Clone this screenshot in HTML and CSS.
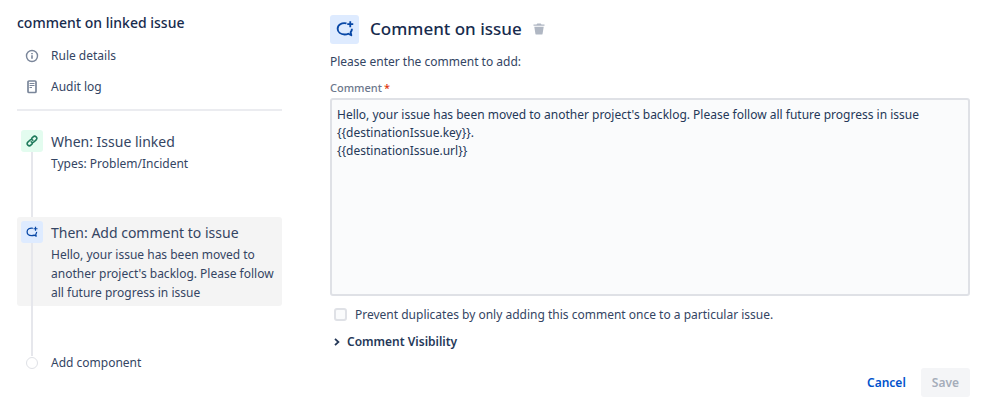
FILE: index.html
```html
<!DOCTYPE html>
<html lang="en">
<head>
<meta charset="utf-8">
<meta name="viewport" content="width=device-width, initial-scale=1">
<title>Automation rule</title>
<link rel="stylesheet" href="styles.css">
</head>
<body>
<svg class="sprite" aria-hidden="true">
  <symbol id="comment-plus" viewBox="0 0 24 24">
    <path d="M14 4.500C7.500 3 2.200 6.700 2.200 11.700c0 4.500 4 7.600 9.300 7.600 1.800 0 3.500-.3 4.900-1l4 2-.9-4c1.200-1.300 1.800-2.900 1.700-4.600" fill="none" stroke="currentColor" stroke-width="2.500" stroke-linejoin="round"/>
    <path d="M19 1.500v8M15 5.500h8" stroke="currentColor" stroke-width="2.400"/>
  </symbol>
</svg>
<div class="page">
  <aside class="sidebar">
    <h2 class="rule-name">comment on linked issue</h2>
    <nav class="rule-nav">
      <a class="nav-link" href="#details">
        <svg class="nav-icon" viewBox="0 0 14 14" fill="none" stroke="currentColor"><circle cx="7" cy="7" r="5.500" stroke-width="1.400"/><path d="M7 6.300v3.500M7 3.900v1.400" stroke-width="1.600"/></svg>
        <span>Rule details</span>
      </a>
      <a class="nav-link" href="#audit">
        <svg class="nav-icon" viewBox="0 0 14 14" fill="none" stroke="currentColor"><rect x="3" y="1" width="8" height="11.500" rx="1" stroke-width="1.700"/><path d="M4.500 3.500h5M4.500 5.500h5M4.500 7.500h2.500" stroke-width="1.200"/></svg>
        <span>Audit log</span>
      </a>
    </nav>
    <ol class="steps">
      <li class="step">
        <span class="tile trigger"><svg viewBox="0 0 24 24" fill="none" stroke="currentColor" stroke-width="3" stroke-linecap="round"><path d="M10.300 13.700a4.200 4.200 0 0 0 6 0l4-4a4.200 4.200 0 0 0-6-6l-3 3"/><path d="M13.700 10.300a4.200 4.200 0 0 0-6 0l-4 4a4.200 4.200 0 0 0 6 6l3-3"/></svg></span>
        <div class="step-body">
          <h3>When: Issue linked</h3>
          <p>Types: Problem/Incident</p>
        </div>
      </li>
      <li class="step selected">
        <span class="tile action"><svg><use href="#comment-plus"/></svg></span>
        <div class="step-body">
          <h3>Then: Add comment to issue</h3>
          <p>Hello, your issue has been moved to another project's backlog. Please follow all future progress in issue</p>
        </div>
      </li>
      <li class="step last">
        <span class="dot"></span>
        <button class="add" type="button">Add component</button>
      </li>
    </ol>
  </aside>
  <main class="editor">
    <header class="editor-head">
      <span class="tile action large"><svg><use href="#comment-plus"/></svg></span>
      <h1>Comment on issue</h1>
      <button class="delete" type="button" aria-label="Delete"><svg viewBox="0 0 12 12" fill="currentColor"><path d="M.5 1.500h3L4.300.4h3.400l.8 1.100h3v1.300H.5zM1.300 3.700h9.400l-1.100 7c-.1.500-.4.900-.9.900H3.300c-.5 0-.8-.4-.9-.9z"/></svg></button>
    </header>
    <form class="form">
      <p class="intro">Please enter the comment to add:</p>
      <label class="field-label" for="comment">Comment<span class="required">*</span></label>
      <textarea id="comment" class="comment" spellcheck="false">Hello, your issue has been moved to another project's backlog. Please follow all future progress in issue {{destinationIssue.key}}.
{{destinationIssue.url}}</textarea>
      <label class="check"><input type="checkbox"><span>Prevent duplicates by only adding this comment once to a particular issue.</span></label>
      <button class="disclosure" type="button" aria-expanded="false"><svg viewBox="0 0 6 8" fill="none" stroke="currentColor" stroke-width="1.800"><path d="M1 .8 4.400 4 1 7.200"/></svg><span>Comment Visibility</span></button>
      <footer class="actions">
        <button class="btn cancel" type="button">Cancel</button>
        <button class="btn save" type="submit" disabled>Save</button>
      </footer>
    </form>
  </main>
</div>
</body>
</html>
```
FILE: styles.css
```css
* { box-sizing: border-box; }

body {
  margin: 0;
  background: #fff;
  color: #344563;
  font: 12px/19px "Noto Sans", "Open Sans", sans-serif;
}

h1, h2, h3, p, ol { margin: 0; padding: 0; font-weight: 400; }
button { margin: 0; padding: 0; border: 0; background: none; color: inherit; font: inherit; cursor: pointer; }
svg { display: block; }
.sprite { display: none; }

.page {
  display: flex;
  gap: 48px;
  padding: 13px 28px 0 17px;
}

.sidebar { flex: 0 0 265px; }

.rule-name {
  color: #172b4d;
  font-size: 14px;
  font-weight: 500;
  line-height: 20px;
}

.rule-nav {
  padding: 7px 0;
  border-bottom: 2px solid #ebecf0;
}

.nav-link {
  display: flex;
  align-items: center;
  gap: 12px;
  height: 31px;
  padding-left: 8px;
  color: inherit;
  text-decoration: none;
}

.nav-icon { width: 14px; height: 14px; color: #7a869a; }

.steps {
  display: flex;
  flex-direction: column;
  gap: 40px;
  padding-top: 15px;
  list-style: none;
}

.step {
  position: relative;
  display: flex;
  gap: 8px;
  padding: 4px;
  border-radius: 3px;
}

.step::before {
  content: "";
  position: absolute;
  top: 10px;
  bottom: -50px;
  left: 14px;
  width: 2px;
  background: #e6e7ec;
}

.step.last::before { display: none; }
.selected { background: #f4f4f4; }
.step-body { flex: 1; min-width: 0; }
.step h3 { font-size: 14px; line-height: 24px; }

.tile {
  position: relative;
  display: grid;
  flex: none;
  place-items: center;
  width: 22px;
  height: 22px;
  border-radius: 3px;
}

.tile svg { width: 12px; height: 12px; }
.trigger { background: #e3fcef; color: #1f7a5c; }
.action { background: #deebff; color: #0747a6; }
.large { width: 29px; height: 29px; }
.large svg { width: 18px; height: 18px; }

.dot {
  position: relative;
  flex: none;
  width: 12px;
  height: 12px;
  margin: 0 5px;
  border: 1px solid #dfe1e6;
  border-radius: 50%;
  background: #fff;
}

.last { align-items: center; }
.add { line-height: 26px; }

.editor { flex: 1; min-width: 0; }

.editor-head {
  display: flex;
  align-items: center;
  height: 32px;
}

.editor-head h1 {
  margin: 0 11px;
  color: #172b4d;
  font-size: 17px;
  font-weight: 500;
  line-height: 24px;
}

.delete { color: #b0b7c3; }
.delete svg { width: 12px; height: 12px; }

.form { display: flex; flex-direction: column; }
.intro { margin-top: 7px; }

.field-label {
  margin-top: 9px;
  color: #6b778c;
  font-size: 11px;
  font-weight: 500;
  line-height: 16px;
}

.required { padding-left: 2px; color: #de350b; }

.comment {
  display: block;
  width: 100%;
  height: 198px;
  margin-top: 2px;
  padding: 6px 5px;
  border: 2px solid #dfe1e6;
  border-radius: 3px;
  background: #fafbfc;
  color: #253858;
  font: inherit;
  line-height: 18px;
  outline: 0;
  resize: none;
}

.check {
  display: flex;
  align-items: center;
  gap: 8px;
  margin-top: 9px;
  padding-left: 4px;
}

.check input {
  width: 13px;
  height: 13px;
  margin: 0;
  border: 2px solid #dfe1e6;
  border-radius: 3px;
  background: #fafbfc;
  appearance: none;
}

.disclosure {
  display: flex;
  align-items: center;
  align-self: flex-start;
  gap: 7px;
  margin-top: 8px;
  padding-left: 4px;
  color: #253858;
  font-weight: 600;
}

.disclosure svg { width: 6px; height: 8px; }

.actions {
  display: flex;
  justify-content: flex-end;
  gap: 4px;
  margin-top: 17px;
}

.btn {
  height: 29px;
  padding: 0 11px;
  border-radius: 3px;
  font-size: 12px;
  font-weight: 600;
}

.cancel { color: #0052cc; }
.save { background: #f4f5f7; color: #a5adba; cursor: default; }
```
